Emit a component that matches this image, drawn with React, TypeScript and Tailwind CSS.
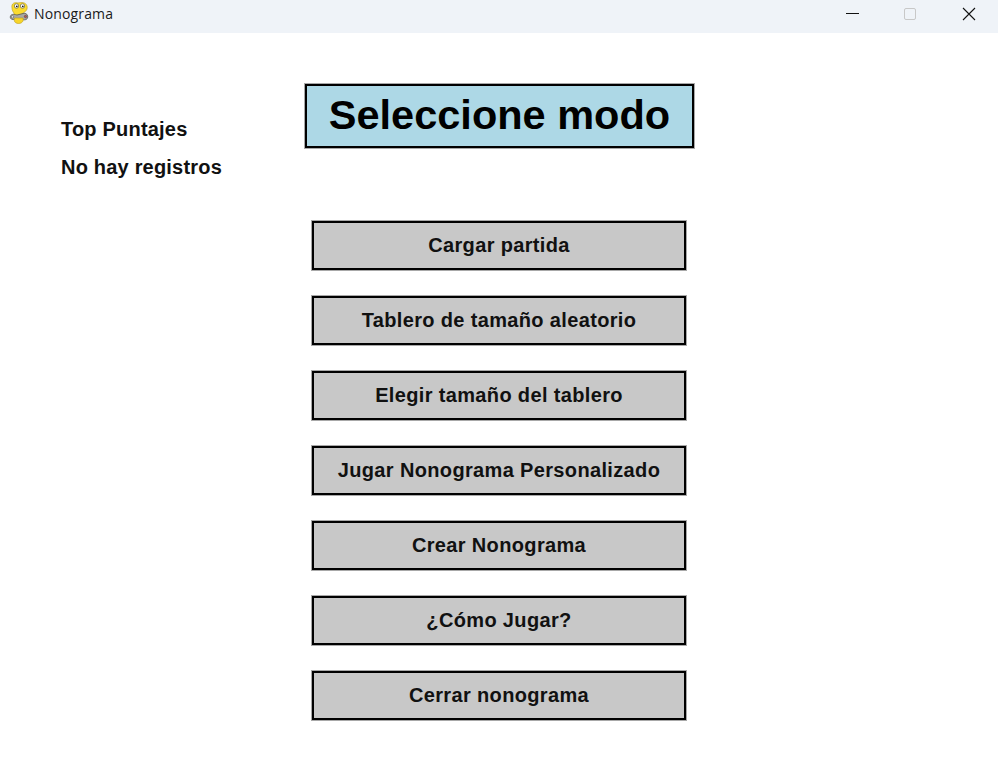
import React from "react";

const MODES = [
  "Cargar partida",
  "Tablero de tamaño aleatorio",
  "Elegir tamaño del tablero",
  "Jugar Nonograma Personalizado",
  "Crear Nonograma",
  "¿Cómo Jugar?",
  "Cerrar nonograma",
];

// coordinates here are the window's own pixels, so the viewBox starts at 9,2
function SnakeIcon() {
  return (
    <svg width="20" height="22" viewBox="9 2 20 22">
      <path d="M12 8 C11 3 15 2 18 3 C21 2 26 2 27 6 C28 10 25 12 23 13 L23 18 L14 18 L14 13 C13 12 12 10 12 8 Z" fill="#fbdc2e" stroke="#b89c1c" strokeWidth="0.6" />
      <path d="M10.5 16 C11.5 13.5 15 14.5 17 15 L23 13.5 C26 12.5 28.5 15 27.5 18 C26.5 20.5 23 20 21 19 L15 19 C12 20.5 9.5 18.5 10.5 16 Z" fill="#a9a9a0" stroke="#55554d" strokeWidth="0.8" />
      <path d="M14.5 18 L23 18 C24 21.5 21.5 23.5 18.5 23.5 C15 23.5 13.5 21 14.5 18 Z" fill="#f7d52a" stroke="#b89c1c" strokeWidth="0.6" />
      <circle cx="16.5" cy="6" r="2.2" fill="#fff" stroke="#4a4a3a" strokeWidth="0.6" />
      <circle cx="22.5" cy="6" r="2.2" fill="#fff" stroke="#4a4a3a" strokeWidth="0.6" />
      <circle cx="16.8" cy="6.3" r="0.9" fill="#111" />
      <circle cx="22.8" cy="6.3" r="0.9" fill="#111" />
      <circle cx="12.5" cy="16.8" r="1.2" fill="#e8e8e8" stroke="#444" strokeWidth="0.5" />
      <circle cx="25.5" cy="16.5" r="1.2" fill="#c05050" stroke="#444" strokeWidth="0.5" />
    </svg>
  );
}

function TitleBar() {
  return (
    <div className="h-[33px] bg-[#eff3f8] flex items-center">
      <div className="ml-[9px] mr-[5px] -mt-[7px] flex items-center">
        <SnakeIcon />
      </div>
      <span className="-mt-[6px] text-[14px] tracking-[0.15px] text-[#1a1a1a] font-['Open_Sans',sans-serif]">Nonograma</span>
      <div className="ml-auto flex items-center">
        <div className="w-[58px] h-[33px] flex items-center justify-center">
          <div className="w-[13px] h-px bg-[#111] -mt-[6px] -ml-[2px]" />
        </div>
        <div className="w-[58px] h-[33px] flex items-center justify-center">
          <div className="w-3 h-3 -mt-[5px] -ml-[2px] border border-[#c8c8c8] rounded-[2px]" />
        </div>
        <div className="w-[58px] h-[33px] flex items-center justify-center">
          <svg width="14" height="14" viewBox="0 0 14 14" className="-mt-[5px]">
            <path d="M1 1 L13 13 M13 1 L1 13" stroke="#111" strokeWidth="1.1" />
          </svg>
        </div>
      </div>
    </div>
  );
}

export default function App() {
  return (
    <div className="w-[998px] h-[780px] bg-white overflow-hidden font-['Liberation_Sans',Arial,sans-serif]">
      <TitleBar />
      <div className="flex">
        <div className="w-[304px] pl-[61px] pt-[85px] text-[20px] font-bold text-[#111] leading-[23px] tracking-[0.2px]">
          <p>Top Puntajes</p>
          <p className="mt-[15px]">No hay registros</p>
        </div>
        <div className="w-[391px] pt-[51px]">
          <div className="mx-px h-[64px] bg-[#add8e6] border-2 border-black ring-1 ring-[#a8a8a8] flex items-center justify-center">
            <h1 className="text-[41.5px] font-bold text-black leading-none -mt-[2px]">Seleccione modo</h1>
          </div>
          <div className="mt-[73px] ml-[8px] mr-[9px] flex flex-col gap-[26px]">
            {MODES.map((label) => (
              <button
                key={label}
                className="h-[49px] pb-[2px] bg-[#c8c8c8] border-2 border-black ring-1 ring-[#a8a8a8] flex items-center justify-center text-[20px] font-bold text-[#111] tracking-[0.35px]"
              >
                {label}
              </button>
            ))}
          </div>
        </div>
      </div>
    </div>
  );
}
